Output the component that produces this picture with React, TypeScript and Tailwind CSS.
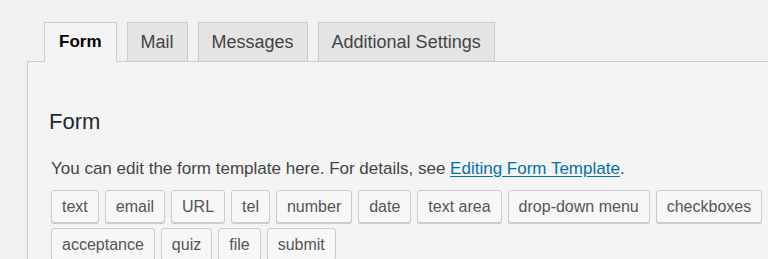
import React from 'react';

const tabs = ['Form', 'Mail', 'Messages', 'Additional Settings'];

const tagRows = [
  ['text', 'email', 'URL', 'tel', 'number', 'date', 'text area', 'drop-down menu', 'checkboxes'],
  ['acceptance', 'quiz', 'file', 'submit'],
];

const TagButton: React.FC<{ label: string }> = ({ label }) => (
  <button className="h-[33px] shrink-0 whitespace-nowrap rounded-[3px] border border-[#cccccc] bg-[#f7f7f7] px-[10px] text-[16px] leading-[31px] text-[#555555] shadow-[0_1px_0_#cccccc]">
    {label}
  </button>
);

export default function App() {
  return (
    <div
      className="h-[259px] w-[768px] overflow-hidden bg-[#f1f1f1]"
      style={{ fontFamily: '"Liberation Sans", Arial, sans-serif' }}
    >
      <div className="flex items-end gap-[10px] pl-[44px] pt-[22px]">
        {tabs.map((tab, i) => (
          <div
            key={tab}
            className={
              i === 0
                ? 'relative z-10 -mb-px flex h-[40px] items-center border border-b-[#f4f4f4] border-[#cccccc] bg-[#f4f4f4] px-[14px] text-[17px] font-bold text-black'
                : 'relative z-10 -mb-px flex h-[40px] items-center border border-[#cccccc] bg-[#e4e4e4] px-[13px] text-[18px] text-[#444444]'
            }
          >
            {tab}
          </div>
        ))}
      </div>
      <div className="ml-[27px] h-full border-l border-t border-[#cccccc] bg-[#f4f4f4] pl-[21px] pt-[45px]">
        <h2 className="text-[22px] leading-[29px] text-[#23282d]">Form</h2>
        <p className="mt-[20px] pl-[2px] text-[17px] leading-[26px] text-[#444444]">
          You can edit the form template here. For details, see{' '}
          <a href="#" className="text-[#0073aa] underline underline-offset-2">
            Editing Form Template
          </a>
          .
        </p>
        <div className="mt-[8px] flex flex-col gap-[5px] pl-[2px]">
          {tagRows.map((row, r) => (
            <div key={r} className="flex gap-[6px]">
              {row.map((t) => (
                <TagButton key={t} label={t} />
              ))}
            </div>
          ))}
        </div>
      </div>
    </div>
  );
}
